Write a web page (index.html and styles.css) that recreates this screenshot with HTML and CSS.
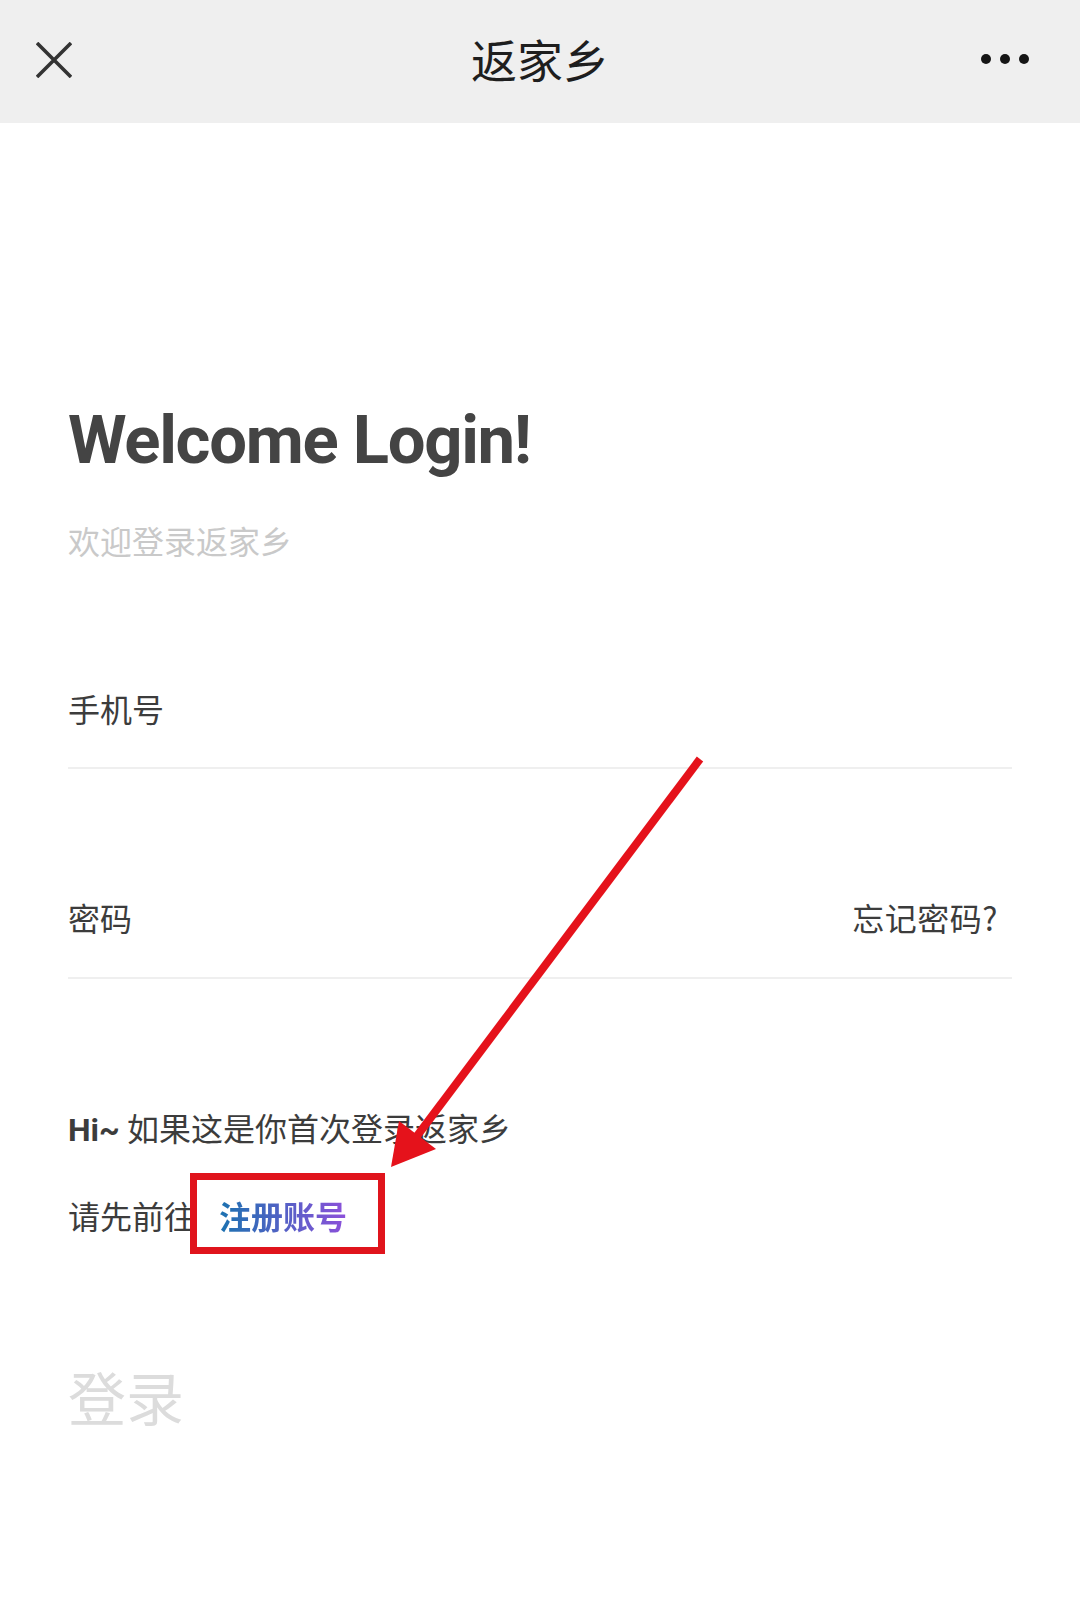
FILE: index.html
```html
<!DOCTYPE html>
<html lang="zh-CN">
<head>
    <meta charset="UTF-8">
    <meta name="viewport" content="width=device-width, initial-scale=1.0">
    <title>返家乡</title>
    <link rel="stylesheet" href="styles.css">
</head>
<body>
    <div class="top-bar">
        <div class="bar-left">
            <svg class="close-icon" width="36" height="36" viewBox="0 0 36 36">
                <path d="M1 1 L35 35 M35 1 L1 35" stroke="#333" stroke-width="3.6" fill="none"/>
            </svg>
        </div>
        <div class="bar-title">返家乡</div>
        <div class="bar-right">
            <span class="dot"></span><span class="dot"></span><span class="dot"></span>
        </div>
    </div>

    <div class="login-page">
        <h1 class="welcome">Welcome Login!</h1>
        <p class="welcome-sub">欢迎登录返家乡</p>

        <div class="field field-phone">
            <span class="field-label">手机号</span>
        </div>
        <div class="field field-pass">
            <span class="field-label">密码</span>
            <span class="forgot">忘记密码?</span>
        </div>

        <p class="hint"><span class="hint-hi">Hi~</span> 如果这是你首次登录返家乡</p>
        <p class="hint hint-second">请先前往<span class="register">注册账号</span></p>

        <div class="login-btn">登录</div>
    </div>

    <svg class="annotation" width="1080" height="1601" viewBox="0 0 1080 1601">
        <line x1="700" y1="759" x2="414" y2="1140" stroke="#e5121b" stroke-width="8"/>
        <polygon points="391,1167 399,1121 436,1149" fill="#e5121b"/>
    </svg>
</body>
</html>
```

FILE: styles.css
```css
body {
    margin: 0;
    font-family: "Noto Sans CJK SC", sans-serif;
    background: #fff;
    color: #3c3c3c;
    position: relative;
    min-height: 1601px;
}

.top-bar {
    height: 123px;
    background: #efefef;
    display: grid;
    grid-template-columns: 1fr auto 1fr;
    align-items: center;
    padding: 0 51px 0 36px;
}

.close-icon {
    display: block;
    margin-top: -3px;
}

.bar-title {
    font-size: 46px;
    line-height: 1;
    color: #1e1e1e;
    margin: -8px 0 0 15px;
}

.bar-right {
    display: flex;
    justify-content: flex-end;
    gap: 9px;
    margin-top: -6px;
}

.dot {
    width: 10px;
    height: 10px;
    border-radius: 50%;
    background: #151515;
}

.login-page {
    padding: 0 68px;
}

.welcome {
    font-family: Roboto, "Noto Sans CJK SC", sans-serif;
    font-weight: 700;
    font-size: 67px;
    line-height: 1;
    letter-spacing: -1.3px;
    color: #444;
    margin: 284px 0 0;
}

.welcome-sub {
    font-size: 32px;
    line-height: 1;
    color: #c9c9c9;
    margin: 50px 0 0;
}

.field {
    display: flex;
    justify-content: space-between;
    border-bottom: 2px solid #efefef;
    font-size: 32px;
    line-height: 1;
}

.field-phone {
    margin-top: 136px;
    padding-bottom: 43px;
}

.field-pass {
    margin-top: 132px;
    padding-bottom: 44px;
}

.forgot {
    padding-right: 14px;
    letter-spacing: 0.5px;
}

.hint {
    font-size: 32px;
    line-height: 1;
    margin: 132px 0 0;
}

.hint-hi {
    font-family: Roboto, sans-serif;
    font-weight: 700;
}

.hint-second {
    margin-top: 53px;
}

.register {
    position: relative;
    margin-left: 23px;
    font-weight: 700;
    background: linear-gradient(90deg, #1b72b0, #8c50da);
    -webkit-background-clip: text;
    background-clip: text;
    color: transparent;
}

.register::after {
    content: "";
    position: absolute;
    left: -29px;
    right: -38px;
    top: -19px;
    bottom: -16px;
    border: 7px solid #e0141c;
}

.login-btn {
    font-size: 58px;
    line-height: 1;
    color: #dcdcdc;
    margin-top: 136px;
}

.annotation {
    position: absolute;
    left: 0;
    top: 0;
    pointer-events: none;
}
```
